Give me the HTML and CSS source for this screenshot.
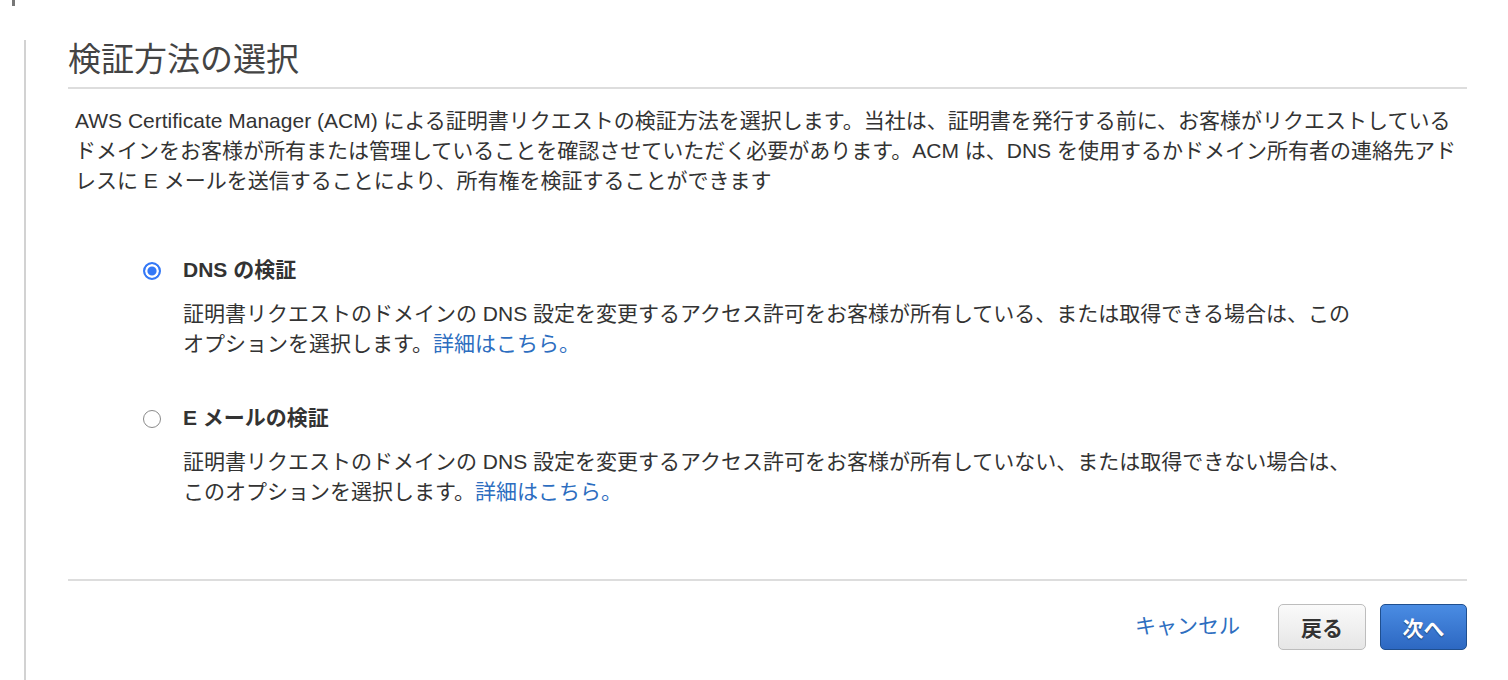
FILE: index.html
```html
<!DOCTYPE html>
<html lang="ja">
<head>
    <meta charset="UTF-8">
    <meta name="viewport" content="width=device-width, initial-scale=1.0">
    <title>検証方法の選択</title>
    <link rel="stylesheet" href="styles.css">
</head>
<body>
    <div class="top-mark"></div>
    <div class="wizard">
        <h1 class="wizard-title">検証方法の選択</h1>
        <p class="intro">AWS Certificate Manager (ACM) による証明書リクエストの検証方法を選択します。当社は、証明書を発行する前に、お客様がリクエストしているドメインをお客様が所有または管理していることを確認させていただく必要があります。ACM は、DNS を使用するかドメイン所有者の連絡先アドレスに E メールを送信することにより、所有権を検証することができます</p>

        <div class="options">
            <label class="option">
                <input type="radio" name="method" value="dns" checked>
                <div class="option-body">
                    <div class="option-title">DNS の検証</div>
                    <p class="option-desc">証明書リクエストのドメインの DNS 設定を変更するアクセス許可をお客様が所有している、または取得できる場合は、この<br>オプションを選択します。<a href="#">詳細はこちら。</a></p>
                </div>
            </label>
            <label class="option">
                <input type="radio" name="method" value="email">
                <div class="option-body">
                    <div class="option-title">E メールの検証</div>
                    <p class="option-desc">証明書リクエストのドメインの DNS 設定を変更するアクセス許可をお客様が所有していない、または取得できない場合は、<br>このオプションを選択します。<a href="#">詳細はこちら。</a></p>
                </div>
            </label>
        </div>

        <div class="wizard-footer">
            <a href="#" class="cancel">キャンセル</a>
            <button class="btn btn-back">戻る</button>
            <button class="btn btn-next">次へ</button>
        </div>
    </div>
</body>
</html>
```

FILE: styles.css
```css
body {
    margin: 0;
    background-color: #fff;
    font-family: "Liberation Sans", "Noto Sans CJK JP", sans-serif;
    color: #333;
    overflow: hidden;
}

.top-mark {
    width: 3px;
    height: 6px;
    margin-left: 12px;
    background-color: #777;
}

.wizard {
    margin: 34px 0 0 24px;
    border-left: 2px solid #d2d2d2;
    padding: 0 41px 0 42px;
    height: 640px;
}

.wizard-title {
    margin: 0;
    padding-bottom: 7px;
    font-size: 33px;
    line-height: 40px;
    font-weight: normal;
    color: #444;
    border-bottom: 2px solid #ddd;
}

.intro {
    margin: 17px 0 0;
    padding-left: 7px;
    font-size: 21px;
    line-height: 30px;
    color: #333;
}

.options {
    margin-top: 59px;
    display: flex;
    flex-direction: column;
    gap: 44px;
}

.option {
    display: flex;
    align-items: flex-start;
    gap: 22px;
    padding-left: 75px;
}

.option input {
    appearance: none;
    -webkit-appearance: none;
    flex: none;
    width: 18px;
    height: 18px;
    margin: 7px 0 0;
    border: 1.6px solid #8a8a8a;
    border-radius: 50%;
    box-sizing: border-box;
    background-color: #fff;
}

.option input:checked {
    border: 2.4px solid #3478f6;
    background-color: #3478f6;
    box-shadow: inset 0 0 0 2.4px #fff;
}

.option-title {
    font-size: 21px;
    line-height: 30px;
    font-weight: bold;
    color: #333;
}

.option-desc {
    margin: 14px 0 0;
    font-size: 21px;
    line-height: 30px;
    color: #333;
}

.option-desc a,
.cancel {
    color: #2d6ec0;
    text-decoration: none;
}

.wizard-footer {
    margin-top: 72px;
    border-top: 2px solid #ddd;
    padding-top: 23px;
    display: flex;
    justify-content: flex-end;
    align-items: center;
}

.cancel {
    font-size: 21px;
    margin-right: 38px;
    margin-top: -6px;
}

.btn {
    height: 46px;
    border-radius: 5px;
    font-family: "Noto Sans CJK JP", sans-serif;
    font-size: 21px;
    font-weight: bold;
    padding: 0;
    cursor: pointer;
}

.btn-back {
    width: 88px;
    margin-right: 14px;
    color: #333;
    border: 1px solid #bdbdbd;
    background: linear-gradient(#fafafa, #e6e6e6);
    text-shadow: 0 1px 0 #fff;
}

.btn-next {
    width: 87px;
    color: #fff;
    border: 1px solid #1f4f8f;
    background: linear-gradient(#4a8ce3, #2d68c2);
    text-shadow: 0 1px 1px #1b3c6c;
}
```
